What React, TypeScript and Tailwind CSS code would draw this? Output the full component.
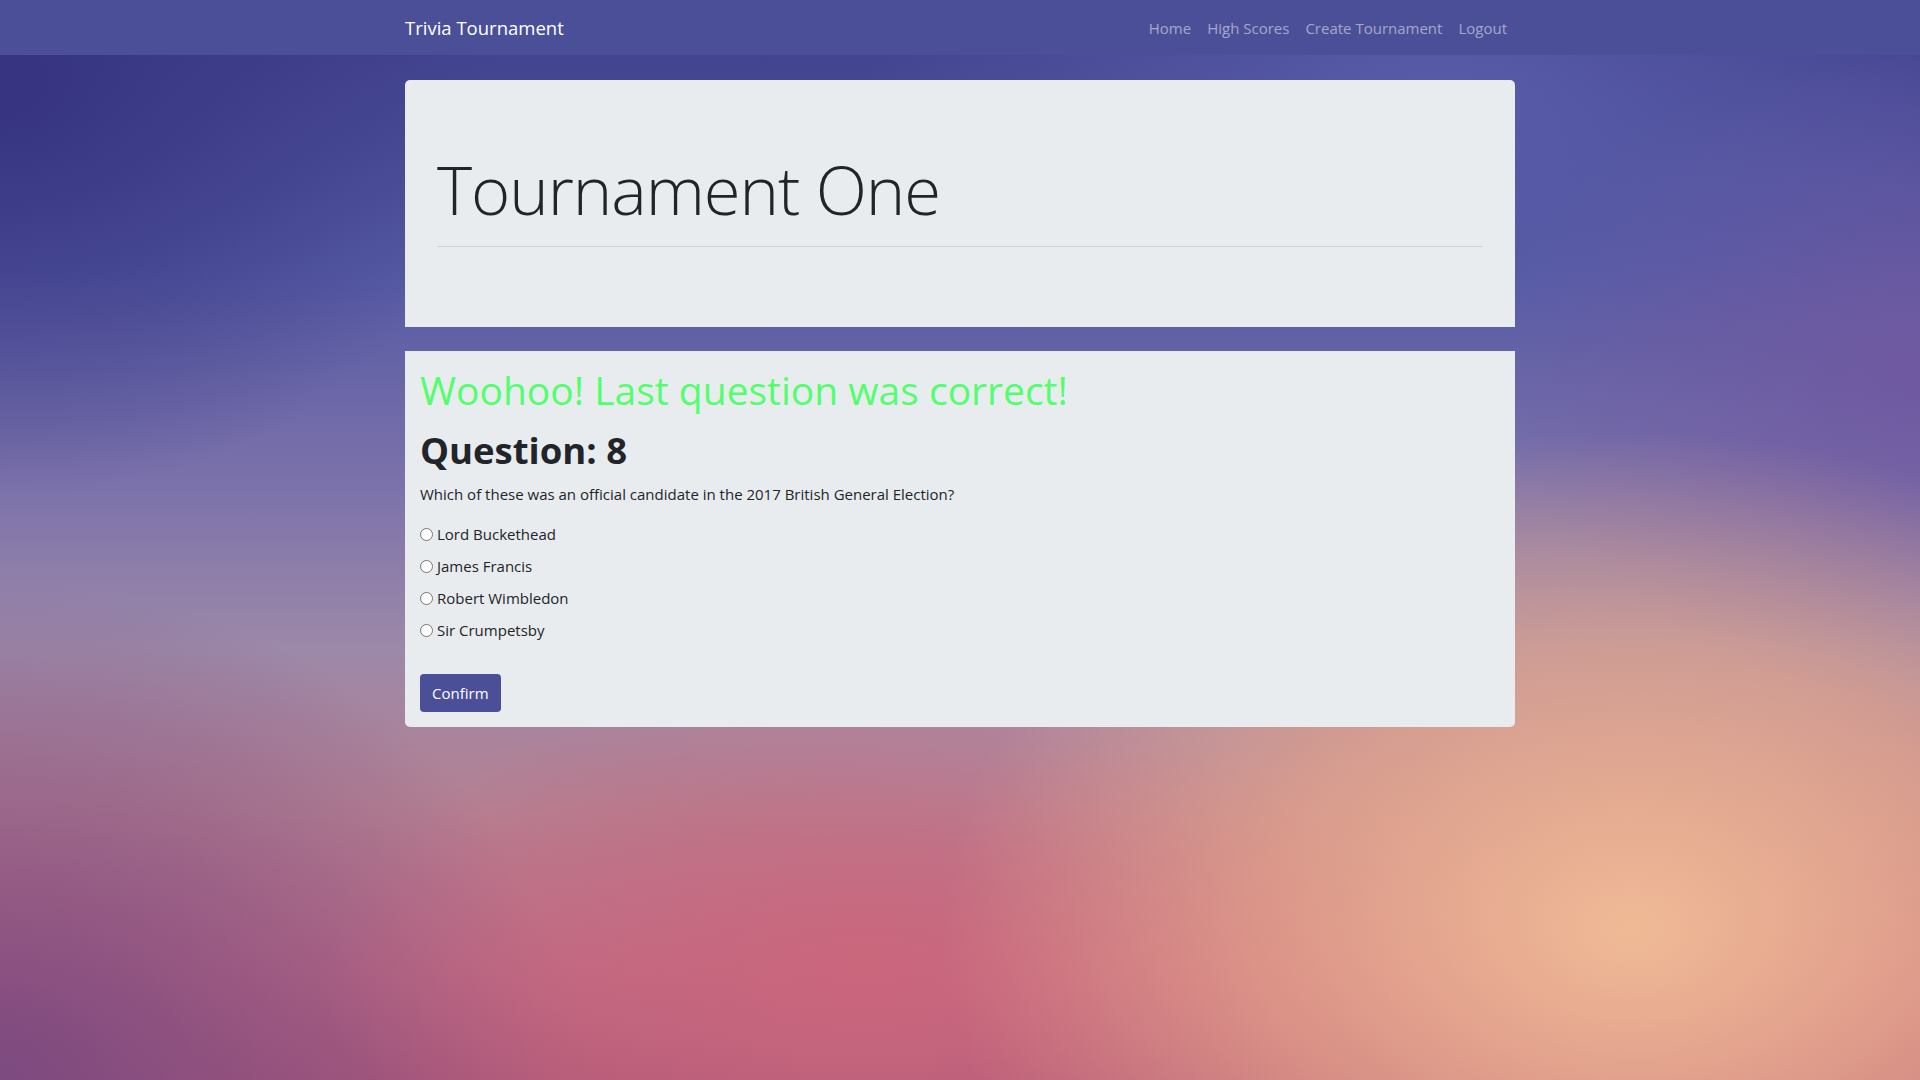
import React, { useState } from "react";

const answers = [
  "Lord Buckethead",
  "James Francis",
  "Robert Wimbledon",
  "Sir Crumpetsby",
];

const navLinks = ["Home", "High Scores", "Create Tournament", "Logout"];

export default function App() {
  const [picked, setPicked] = useState<string | null>(null);

  return (
    <div className="min-h-screen font-['Open_Sans','Noto_Sans',sans-serif] text-[#212529] bg-[radial-gradient(ellipse_36%_46%_at_85%_86%,rgba(240,186,150,1)_0%,rgba(234,168,138,0.65)_55%,rgba(234,168,138,0)_100%),radial-gradient(ellipse_28%_28%_at_45%_90%,rgba(204,102,124,0.9)_0%,rgba(204,102,124,0)_100%),radial-gradient(ellipse_30%_46%_at_0%_100%,rgba(124,74,128,1)_0%,rgba(124,74,128,0)_100%),radial-gradient(ellipse_26%_38%_at_0%_8%,rgba(54,52,128,1)_0%,rgba(54,52,128,0)_100%),radial-gradient(ellipse_30%_25%_at_75%_8%,rgba(96,100,176,0.7)_0%,rgba(96,100,176,0)_100%),radial-gradient(ellipse_22%_30%_at_100%_34%,rgba(112,88,160,0.9)_0%,rgba(112,88,160,0)_100%),radial-gradient(ellipse_30%_22%_at_55%_58%,rgba(176,146,170,0.55)_0%,rgba(176,146,170,0)_100%),linear-gradient(to_bottom,#3f3f8c_0%,#5559a4_25%,#7c72ab_45%,#9c88a8_60%,#b48092_75%,#bd6a84_90%,#b05a7a_100%)]">
      {/* navbar */}
      <nav className="h-[55px] bg-[#4a4f98]">
        <div className="w-[1140px] mx-auto px-[15px] h-full flex items-center justify-between">
          <a className="text-[18.5px] text-white leading-none pt-[2px]">Trivia Tournament</a>
          <ul className="flex items-center">
            {navLinks.map((l) => (
              <li key={l}>
                <a className="px-2 text-[15px] text-white/50">{l}</a>
              </li>
            ))}
          </ul>
        </div>
      </nav>

      <main className="w-[1110px] mx-auto pt-[25px] pb-10">
        {/* jumbotron */}
        <div className="bg-[#e9ecef] rounded-t-[5px] px-8 py-16">
          <h1 className="text-[67px] font-light leading-[86px] tracking-[-0.016em] pt-[2px] mb-[14px]">
            Tournament One
          </h1>
          <hr className="border-0 border-t border-black/10 mt-0 mb-4" />
        </div>

        {/* question card */}
        <div className="mt-6 bg-[#e9ecef] rounded-b-[5px] p-[15px]">
          <h1 className="text-[39px] font-medium leading-[48px] text-[#52ff6c] mb-3">
            Woohoo! Last question was correct!
          </h1>
          <h2 className="text-[36.5px] font-bold leading-[48px] mb-2">Question: 8</h2>
          <p className="text-[15px] leading-6 mb-4">
            Which of these was an official candidate in the 2017 British General Election?
          </p>

          <div className="flex flex-col gap-2">
            {answers.map((a) => (
              <label key={a} className="flex items-center h-6 text-[15px] cursor-pointer">
                <input
                  type="radio"
                  name="answer"
                  checked={picked === a}
                  onChange={() => setPicked(a)}
                  className="appearance-none w-[13px] h-[13px] rounded-full border border-[#767676] bg-white m-0 mr-1 checked:border-[4px] checked:border-[#0075ff]"
                />
                {a}
              </label>
            ))}
          </div>

          <button className="mt-8 h-[38px] px-3 rounded-[4px] bg-[#4a4f98] text-white text-[15px]">
            Confirm
          </button>
        </div>
      </main>
    </div>
  );
}
